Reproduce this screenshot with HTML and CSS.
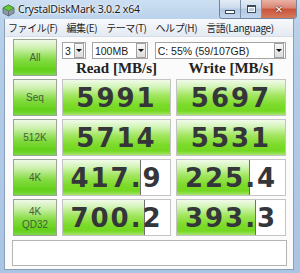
FILE: index.html
```html
<html>
  <head>
    <link rel="stylesheet" href="styles.css">
    <title>CrystalDiskMark 3.0.2 x64</title>
  </head>
  <body>
    <div class="window">
      <div class="titlebar">
        <svg class="app-icon" width="13" height="14" viewBox="0 0 13 14">
          <path d="M1 5 L6.5 2 L12 5 L12 10 L6.5 13 L1 10 Z" fill="#8c9aa6" stroke="#56626c" stroke-width="0.8"/>
          <path d="M1 5 L6.5 2 L12 5 L6.5 8 Z" fill="#66c83a" stroke="#3f8a22" stroke-width="0.8"/>
          <path d="M6.5 8 L6.5 13" stroke="#56626c" stroke-width="0.8"/>
        </svg>
        <span class="title">CrystalDiskMark 3.0.2 x64</span>
        <div class="caption">
          <span class="cap min"><i></i></span>
          <span class="cap max"><i></i></span>
          <span class="cap close">&#x2715;</span>
        </div>
      </div>
      <div class="client">
        <div class="menubar">
          <span>ファイル(F)</span>
          <span>編集(E)</span>
          <span>テーマ(T)</span>
          <span>ヘルプ(H)</span>
          <span>言語(Language)</span>
        </div>
        <div class="bench">
          <div class="board">
            <div class="label">All</div>
            <div class="top">
              <div class="selects">
                <div class="combo c-count"><span class="val">3</span><span class="drop"></span></div>
                <div class="combo c-size"><span class="val">100MB</span><span class="drop"></span></div>
                <div class="combo c-drive"><span class="val">C: 55% (59/107GB)</span><span class="drop"></span></div>
              </div>
              <div class="heads">
                <div>Read [MB/s]</div>
                <div>Write [MB/s]</div>
              </div>
            </div>

            <div class="label">Seq</div>
            <div class="meter"><div class="fill" style="width:100%"></div><div class="num">5991</div></div>
            <div class="meter"><div class="fill" style="width:100%"></div><div class="num">5697</div></div>

            <div class="label">512K</div>
            <div class="meter"><div class="fill" style="width:100%"></div><div class="num">5714</div></div>
            <div class="meter"><div class="fill" style="width:100%"></div><div class="num">5531</div></div>

            <div class="label">4K</div>
            <div class="meter"><div class="fill part" style="width:72%"></div><div class="num">417.9</div></div>
            <div class="meter"><div class="fill part" style="width:67%"></div><div class="num">225.4</div></div>

            <div class="label">4K<br>QD32</div>
            <div class="meter"><div class="fill part" style="width:76%"></div><div class="num">700.2</div></div>
            <div class="meter"><div class="fill part" style="width:72%"></div><div class="num">393.3</div></div>
          </div>
          <div class="comment"></div>
        </div>
      </div>
    </div>
  </body>
</html>
```

FILE: styles.css
```css
html, body {
  margin:  0;
  padding: 0;
}
body {
  font-family: "Liberation Sans", "Noto Sans CJK JP", sans-serif;
  background:  #ffffff;
}
.window {
  width:          300px;
  height:         273px;
  display:        flex;
  flex-direction: column;
  background:     linear-gradient(to bottom, #cddff2 0px, #bad2eb 18px, #b3cce8 60px, #aac5e3 273px);
}

/* title bar */
.titlebar {
  height:      19px;
  display:     flex;
  align-items: flex-start;
  flex:        none;
}
.app-icon {
  margin: 3px 0 0 2px;
  flex:   none;
}
.title {
  margin:      3px 0 0 3px;
  font-family: "Noto Sans", sans-serif;
  font-size:   10.5px;
  line-height: 13px;
  color:       #1a1a1a;
  letter-spacing: -0.2px;
  text-shadow: 0 0 4px #ffffff, 0 0 2px #ffffff;
}
.caption {
  margin-left:  auto;
  margin-right: 3px;
  display:      flex;
  height:       18px;
  border:       1px solid #6f86a3;
  border-top:   none;
  border-radius: 0 0 4px 4px;
  overflow:     hidden;
}
.cap {
  display:         flex;
  align-items:     center;
  justify-content: center;
  height:          18px;
}
.min, .max {
  width:        20px;
  background:   linear-gradient(to bottom, #e3ecf6 0%, #cbdaeb 45%, #b3c8e0 50%, #c3d6ec 100%);
  border-right: 1px solid #7b90ab;
}
.min i {
  width:      8px;
  height:     2px;
  margin-top: 5px;
  background: #ffffff;
  border:     1px solid #3b4a5e;
}
.max i {
  width:      7px;
  height:     5px;
  border:     1px solid #3b4a5e;
  border-top: 2px solid #3b4a5e;
  background: transparent;
  box-shadow: inset 0 0 0 1px #ffffff;
}
.close {
  width:       34px;
  background:  linear-gradient(to bottom, #eab1a4 0%, #d98673 45%, #c8543b 50%, #d67a5c 100%);
  color:       #ffffff;
  font-family: "DejaVu Sans", sans-serif;
  font-size:   10px;
  font-weight: bold;
  text-shadow: 0 0 2px #5a1a10, 0 0 1px #5a1a10;
}

/* client area */
.client {
  flex:           1;
  margin:         0 6px 3px 4px;
  display:        flex;
  flex-direction: column;
  background:     #fbfbfb;
  border-left:    1px solid #8aa0b8;
  border-right:   1px solid #8aa0b8;
  border-bottom:  1px solid #8aa0b8;
}
.menubar {
  height:      17px;
  display:     flex;
  align-items: center;
  gap:         9px;
  padding-left: 3px;
  background:  linear-gradient(to bottom, #f7f9fc, #e4eaf2);
  border-bottom: 1px solid #d6dde8;
  font-family: "Noto Sans CJK JP", sans-serif;
  font-size:   10px;
  color:       #1e1e1e;
  letter-spacing: -0.4px;
}
.bench {
  flex:        1;
  padding:     2px 0 0 8px;
}
.board {
  display:               grid;
  grid-template-columns: 44px 109px 110px;
  grid-auto-rows:        37px;
  column-gap:            5px;
  row-gap:               3px;
}

/* row labels */
.label {
  display:         flex;
  align-items:     center;
  justify-content: center;
  text-align:      center;
  border:          1px solid #9aa596;
  background:      linear-gradient(to bottom, #eff9e8 0%, #c9efa8 25%, #86dc44 55%, #62d018 85%, #7ed846 100%);
  font-size:       10px;
  line-height:     13px;
  color:           #45603a;
}

/* selects + headers */
.top {
  grid-column:    2 / 4;
  display:        flex;
  flex-direction: column;
}
.selects {
  display:    flex;
  height:     17px;
  margin-top: 3px;
}
.combo {
  display:     flex;
  align-items: center;
  box-sizing:  border-box;
  height:      17px;
  border:      1px solid #a5a5a5;
  background:  #ffffff;
  font-size:   10.5px;
  color:       #222222;
}
.combo .val {
  flex:         1;
  padding-left: 2px;
  white-space:  nowrap;
}
.c-count { width: 24px; }
.c-size  { width: 56px; margin-left: 6px; }
.c-drive { width: 132px; margin-left: 7px; }
.drop {
  width:      8px;
  height:     13px;
  margin-right: 1px;
  border:     1px solid #a0a0a0;
  background: linear-gradient(to bottom, #f7f7f7, #dcdcdc);
  display:    flex;
  align-items: center;
  justify-content: center;
}
.drop::after {
  content:      "";
  border-left:  3px solid transparent;
  border-right: 3px solid transparent;
  border-top:   3px solid #111111;
}
.heads {
  display:               grid;
  grid-template-columns: 109px 110px;
  column-gap:            5px;
  margin-top:            1px;
  font-family:           "Liberation Serif", serif;
  font-weight:           bold;
  font-size:             15px;
  line-height:           17px;
  text-align:            center;
  color:                 #222222;
}

/* result meters */
.meter {
  display:    grid;
  border:     1px solid #c4c4c4;
  background: #ffffff;
}
.fill, .num {
  grid-area: 1 / 1;
}
.fill {
  background: linear-gradient(to bottom, #f1fbea 0%, #d6f5bc 18%, #a0e65c 45%, #7edb2c 70%, #74d820 88%, #a6e46e 100%);
}
.fill.part {
  border-right: 1px solid #6f6f6f;
}
.num {
  align-self:     center;
  text-align:     center;
  font-family:    "DejaVu Sans", sans-serif;
  font-weight:    bold;
  font-size:      26px;
  letter-spacing: 2px;
  color:          #34363a;
}

.comment {
  width:      275px;
  height:     26px;
  box-sizing: border-box;
  margin:     4px 0 0 -1px;
  border:     1px solid #b4b4b4;
  background: #ffffff;
}
```
